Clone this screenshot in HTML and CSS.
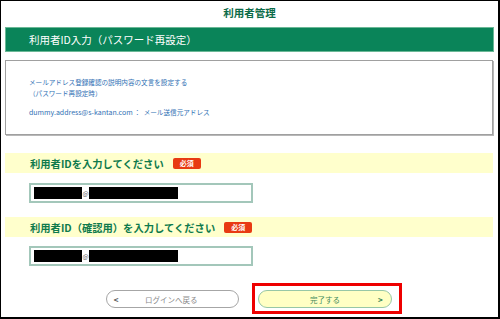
FILE: index.html
```html
<!DOCTYPE html>
<html lang="ja">
<head>
<meta charset="utf-8">
<title>利用者管理</title>
<link rel="stylesheet" href="styles.css">
</head>
<body>
<div class="frame">
  <div class="title">利用者管理</div>
  <div class="section-bar">利用者ID入力（パスワード再設定）</div>
  <div class="info">
    <p class="info-line">メールアドレス登録確認の説明内容の文言を設定する</p>
    <p class="info-line">（パスワード再設定時）</p>
    <p class="info-line info-gap"><span class="latin">dummy.address@s-kantan.com</span> ：&nbsp;&nbsp;メール送信元アドレス</p>
  </div>
  <div class="label-bar">利用者IDを入力してください<span class="badge">必須</span></div>
  <div class="input"><span class="redact r1"></span><span class="at">@</span><span class="redact r2"></span></div>
  <div class="label-bar second">利用者ID（確認用）を入力してください<span class="badge">必須</span></div>
  <div class="input input2"><span class="redact r1"></span><span class="at">@</span><span class="redact r2"></span></div>
  <div class="actions">
    <button class="btn btn-back"><span class="arrow">&lt;</span><span class="btn-label">ログインへ戻る</span></button>
    <div class="highlight">
      <button class="btn btn-done"><span class="btn-label">完了する</span><span class="arrow">&gt;</span></button>
    </div>
  </div>
</div>
</body>
</html>
```

FILE: styles.css
```css
html, body {
  margin: 0;
  padding: 0;
  background: #fff;
}
body {
  font-family: "Noto Sans CJK JP", "Noto Sans", sans-serif;
}
.frame {
  box-sizing: border-box;
  width: 500px;
  height: 319px;
  border-left: 1px solid #000;
  border-top: 1px solid #000;
  border-right: 2px solid #000;
  border-bottom: 2px solid #000;
  padding: 0 4px;
}
.title {
  height: 26px;
  line-height: 24px;
  text-align: center;
  font-size: 10.5px;
  font-weight: bold;
  color: #0b6b48;
}
.section-bar {
  box-sizing: border-box;
  height: 25px;
  background: #0a8459;
  border: 1px solid #6bb896;
  color: #fff;
  font-size: 10.5px;
  line-height: 23px;
  padding-left: 23px;
}
.info {
  box-sizing: border-box;
  margin-top: 8px;
  width: 488px;
  height: 75px;
  border: 1px solid #a0a0a0;
  box-shadow: 1px 1px 0 #b8b8b8;
  padding: 16px 0 0 23px;
}
.info-line {
  margin: 0;
  font-size: 6.6px;
  line-height: 10.7px;
  color: #2f6fb4;
}
.info-gap {
  margin-top: 9px;
}
.latin {
  font-size: 7px;
}
.label-bar {
  margin-top: 18px;
  width: 488px;
  height: 20px;
  background: #ffffcc;
  display: flex;
  align-items: center;
  padding-left: 25px;
  box-sizing: border-box;
  font-size: 10.3px;
  font-weight: bold;
  color: #0e7a4c;
}
.label-bar.second {
  margin-top: 14px;
}
.badge {
  margin-left: 9px;
  width: 28px;
  height: 11px;
  background: #e83a12;
  border-radius: 2px;
  color: #fff;
  font-size: 7px;
  font-weight: bold;
  line-height: 11px;
  text-align: center;
}
.input {
  box-sizing: border-box;
  margin: 10px 0 0 24px;
  width: 224px;
  height: 20px;
  border: 2px solid #a3c7ba;
  display: flex;
  align-items: center;
  padding-left: 3px;
}
.input2 {
  margin-top: 9px;
}
.redact {
  display: block;
  height: 12px;
  background: #000;
}
.r1 { width: 48px; }
.r2 { width: 89px; }
.at {
  width: 7px;
  font-size: 6.5px;
  line-height: 12px;
  color: #666;
  text-align: center;
}
.actions {
  display: flex;
  align-items: flex-start;
  margin-top: 17px;
  padding-left: 101px;
}
.btn {
  box-sizing: border-box;
  height: 18px;
  border-radius: 9px;
  font-family: "Noto Sans CJK JP", "Noto Sans", sans-serif;
  font-size: 7.5px;
  padding: 0;
  display: flex;
  align-items: center;
}
.btn-back {
  margin-top: 7px;
  width: 133px;
  background: #fff;
  border: 1px solid #a6a6a6;
  color: #8a8a8a;
}
.btn-back .arrow {
  margin-left: 6px;
  width: 6px;
  font-size: 8px;
  font-weight: bold;
  color: #555;
}
.btn-back .btn-label {
  margin-left: 26px;
}
.highlight {
  margin-left: 13px;
  border: 3px solid #ee0000;
  padding: 4px 7px 3px 3px;
}
.btn-done {
  width: 134px;
  background: #ffffc4;
  border: 1px solid #97c7a6;
  color: #3f8a5c;
}
.btn-done .btn-label {
  margin-left: 51px;
}
.btn-done .arrow {
  margin-left: 38px;
  font-size: 8px;
  font-weight: bold;
  color: #2e7f52;
}
```
